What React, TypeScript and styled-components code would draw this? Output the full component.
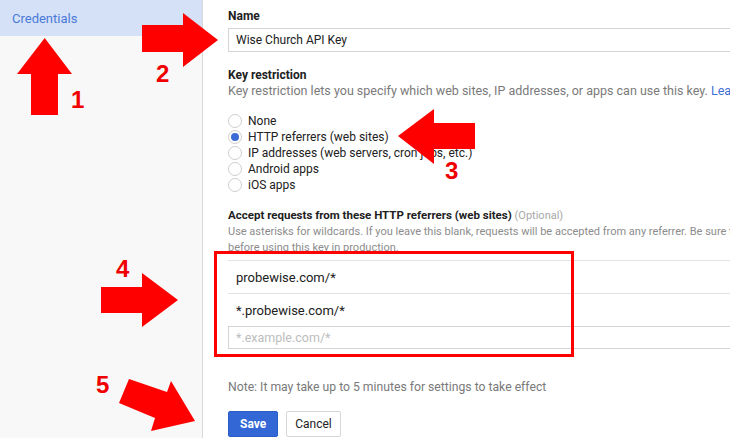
import styled, { createGlobalStyle } from "styled-components";

const GlobalStyle = createGlobalStyle`
  html, body {
    margin: 0;
    padding: 0;
    background: #ffffff;
    overflow: hidden;
  }
  body {
    font-family: Roboto, "Liberation Sans", Arial, sans-serif;
    color: #212121;
  }
`;

const restrictions = [
    "None",
    "HTTP referrers (web sites)",
    "IP addresses (web servers, cron jobs, etc.)",
    "Android apps",
    "iOS apps",
];

const referrers = ["probewise.com/*", "*.probewise.com/*"];

// callouts drawn over the screenshot
const marks = [
    { n: "1", x: 71, y: 88 },
    { n: "2", x: 156, y: 62 },
    { n: "3", x: 445, y: 159 },
    { n: "4", x: 116, y: 257 },
    { n: "5", x: 96, y: 373 },
];

const arrows = [
    "44.7,38 72,74 58,74 58,115 31,115 31,74 17,74",
    "142,25 183,25 183,13 218,40 183,67 183,52 142,52",
    "398,136 434,109 434,123 475,123 475,149 434,149 434,164",
    "101,287 142,287 142,273 178,300 142,327 142,313 101,313",
    "129,379 167,392 171,381 195,421 151,431 155,418 119,403",
];

export default function App() {
    return (
        <>
            <GlobalStyle />
            <Page>
                <Sidebar>
                    <NavItem $active>Credentials</NavItem>
                </Sidebar>
                <Main>
                    <Form>
                        <Field>
                            <Label>Name</Label>
                            <TextInput defaultValue="Wise Church API Key" />
                        </Field>

                        <Field $gap={15}>
                            <Label>Key restriction</Label>
                            <Description>
                                Key restriction lets you specify which web sites, IP addresses, or apps can use this key.{" "}
                                <Link>Learn more</Link>
                            </Description>
                            <RadioList>
                                {restrictions.map((r, i) => (
                                    <RadioRow key={r}>
                                        <RadioDot $checked={i === 1} />
                                        {r}
                                    </RadioRow>
                                ))}
                            </RadioList>
                        </Field>

                        <Field $gap={14}>
                            <Label $size={11.5}>
                                Accept requests from these HTTP referrers (web sites) <Optional>(Optional)</Optional>
                            </Label>
                            <Hint>
                                Use asterisks for wildcards. If you leave this blank, requests will be accepted from any referrer. Be sure to test
                                <br />
                                before using this key in production.
                            </Hint>
                            <ReferrerList>
                                {referrers.map((r) => (
                                    <ReferrerRow key={r}>{r}</ReferrerRow>
                                ))}
                                <ReferrerInput placeholder="*.example.com/*" />
                            </ReferrerList>
                        </Field>

                        <Note>Note: It may take up to 5 minutes for settings to take effect</Note>

                        <Actions>
                            <Button $primary>Save</Button>
                            <Button>Cancel</Button>
                        </Actions>
                    </Form>
                </Main>

                <Overlay>
                    <svg width="730" height="438" viewBox="0 0 730 438">
                        {arrows.map((p) => (
                            <polygon key={p} points={p} fill="#ff0000" />
                        ))}
                    </svg>
                    <HighlightBox />
                    {marks.map((m) => (
                        <Mark key={m.n} style={{ left: m.x, top: m.y }}>
                            {m.n}
                        </Mark>
                    ))}
                </Overlay>
            </Page>
        </>
    );
}

const Page = styled.div`
    position: relative;
    display: flex;
    width: 730px;
    height: 438px;
    overflow: hidden;
`

const Sidebar = styled.nav`
    width: 202px;
    flex-shrink: 0;
    background: #f8f8f8;
    border-right: 1px solid #d9d9d9;
`

const NavItem = styled.div<{ $active?: boolean }>`
    height: 36px;
    padding-left: 12px;
    display: flex;
    align-items: center;
    font-size: 13px;
    color: ${(p) => (p.$active ? "#4a7ad9" : "#212121")};
    background: ${(p) => (p.$active ? "#d5e1f6" : "transparent")};
`

const Main = styled.main`
    flex: 1;
    min-width: 0;
    padding: 8px 0 0 25px;
`

const Form = styled.div`
    width: 660px;
`

const Field = styled.section<{ $gap?: number }>`
    margin-top: ${(p) => p.$gap ?? 0}px;
`

const Label = styled.div<{ $size?: number }>`
    font-size: ${(p) => p.$size ?? 12}px;
    line-height: 16px;
    font-weight: 700;
    color: #212121;
    white-space: nowrap;
`

const Optional = styled.span`
    font-weight: 400;
    color: #a8a8a8;
    font-size: 11px;
`

const TextInput = styled.input`
    display: block;
    box-sizing: border-box;
    margin-top: 4px;
    width: 100%;
    height: 24px;
    padding: 0 7px;
    border: 1px solid #d4d4d4;
    font-family: Roboto, "Liberation Sans", Arial, sans-serif;
    font-size: 12px;
    color: #212121;
    outline: none;
`

const Description = styled.div`
    font-size: 12.5px;
    line-height: 16px;
    color: #7a7a7a;
    white-space: nowrap;
`

const Link = styled.span`
    color: #3f6fd6;
`

const RadioList = styled.div`
    margin-top: 14px;
    display: flex;
    flex-direction: column;
`

const RadioRow = styled.label`
    display: flex;
    align-items: center;
    gap: 6px;
    height: 16px;
    font-size: 12px;
    color: #212121;
    white-space: nowrap;
`

const RadioDot = styled.span<{ $checked?: boolean }>`
    width: 12px;
    height: 12px;
    border-radius: 50%;
    border: 1px solid #cdcdcd;
    background: #fff;
    display: inline-flex;
    align-items: center;
    justify-content: center;
    &::after {
        content: "";
        width: 8px;
        height: 8px;
        border-radius: 50%;
        background: ${(p) => (p.$checked ? "#3b6bd6" : "transparent")};
    }
`

const Hint = styled.div`
    font-size: 11px;
    line-height: 16px;
    color: #8c8c8c;
    white-space: nowrap;
`

const ReferrerList = styled.div`
    margin-top: 4px;
`

const ReferrerRow = styled.div`
    box-sizing: border-box;
    height: 33px;
    border-top: 1px solid #e2e2e2;
    padding-left: 8px;
    display: flex;
    align-items: center;
    font-size: 13px;
    color: #212121;
`

const ReferrerInput = styled.input`
    display: block;
    box-sizing: border-box;
    width: 100%;
    height: 23px;
    padding: 0 7px;
    border: 1px solid #d4d4d4;
    font-family: Roboto, "Liberation Sans", Arial, sans-serif;
    font-size: 12.5px;
    outline: none;
    &::placeholder {
        color: #bdbdbd;
    }
`

const Note = styled.div`
    margin-top: 30px;
    font-size: 12.2px;
    line-height: 16px;
    color: #7a7a7a;
`

const Actions = styled.div`
    margin-top: 16px;
    display: flex;
    gap: 8px;
`

const Button = styled.button<{ $primary?: boolean }>`
    box-sizing: border-box;
    height: 26px;
    padding: 0 ${(p) => (p.$primary ? 11 : 8)}px;
    border-radius: 2px;
    font-family: Roboto, "Liberation Sans", Arial, sans-serif;
    font-size: 12px;
    font-weight: ${(p) => (p.$primary ? 700 : 400)};
    color: ${(p) => (p.$primary ? "#ffffff" : "#212121")};
    background: ${(p) => (p.$primary ? "#3367d6" : "#ffffff")};
    border: 1px solid ${(p) => (p.$primary ? "#2c5cc5" : "#d6d6d6")};
`

const Overlay = styled.div`
    position: absolute;
    inset: 0;
    pointer-events: none;
    svg {
        position: absolute;
        left: 0;
        top: 0;
    }
`

const HighlightBox = styled.div`
    position: absolute;
    left: 214px;
    top: 251px;
    width: 360px;
    height: 106px;
    box-sizing: border-box;
    border: 3px solid #ff0000;
`

const Mark = styled.span`
    position: absolute;
    font-family: "Liberation Sans", Arial, sans-serif;
    font-weight: 700;
    font-size: 24px;
    line-height: 24px;
    color: #f00000;
`
